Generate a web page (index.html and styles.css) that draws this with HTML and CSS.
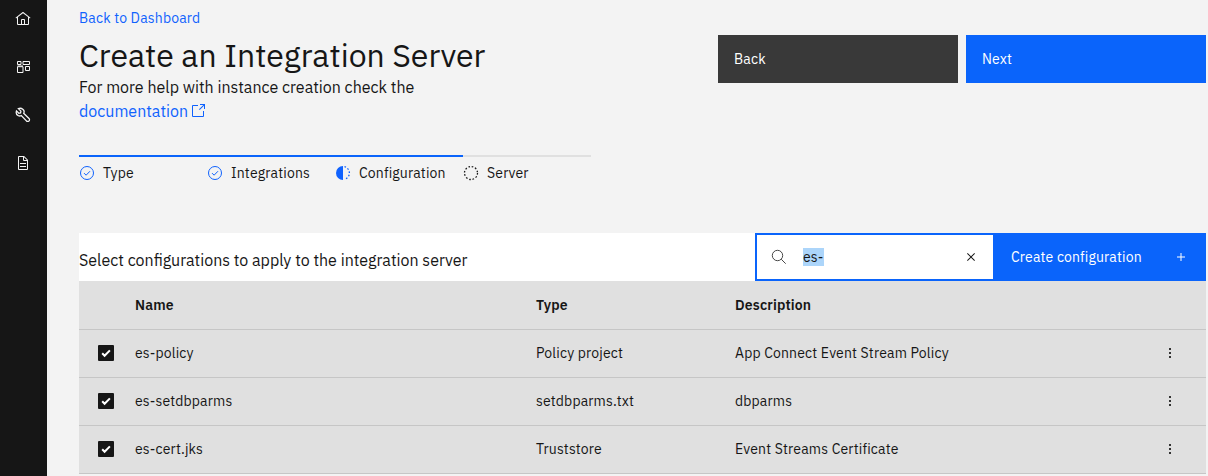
FILE: index.html
```html
<!DOCTYPE html>
<html lang="en">
<head>
<meta charset="utf-8">
<title>Create an Integration Server</title>
<link rel="stylesheet" href="styles.css">
</head>
<body>
<div class="app">
  <nav class="rail">
    <a class="rail-item"><svg class="icon" viewBox="0 0 32 32"><path d="M16.6 2.2a1 1 0 0 0-1.24 0L1 13.42l1.24 1.57L4 13.62V26a2 2 0 0 0 2 2h20a2 2 0 0 0 2-2V13.63L29.76 15 31 13.43ZM18 26h-4v-8h4Zm2 0v-8a2 2 0 0 0-2-2h-4a2 2 0 0 0-2 2v8H6V12.06l10-7.79 10 7.8V26Z"/></svg></a>
    <a class="rail-item"><svg class="icon line" viewBox="0 0 16 16"><path d="M2.500 2.500h3.500v3H2.500zM8 2.500h6.500v3H8zM2.500 7.700h5.500v5.800H2.500zM10.500 7.500h4v4h-4zM2.500 7h5.500"/></svg></a>
    <a class="rail-item"><svg class="icon line wrench" viewBox="0 0 16 16"><path d="M3.400 1.600 5.900 4.100 5.600 5.900 3.800 6.200 1.500 3.900C.8 6.200 1.500 7.900 3.300 8.700 4.500 9.200 5.500 9 6.300 8.600L11.400 13.800C12 14.600 13.100 14.700 13.900 14 14.700 13.200 14.700 12.200 14 11.500L8.700 6.300C9.400 4.900 9.100 3.200 7.800 2.200 6.500 1.200 5 1 3.400 1.600Z"/></svg></a>
    <a class="rail-item"><svg class="icon" viewBox="0 0 32 32"><path d="m25.700 9.300-7-7A1 1 0 0 0 18 2H8a2 2 0 0 0-2 2v24a2 2 0 0 0 2 2h16a2 2 0 0 0 2-2V10a1 1 0 0 0-.3-.7ZM18 4.400l5.600 5.600H18ZM24 28H8V4h8v6a2 2 0 0 0 2 2h6ZM10 22h12v2H10zM10 16h12v2H10z"/></svg></a>
  </nav>

  <main class="content">
    <a class="crumb">Back to Dashboard</a>
    <header class="head">
      <div class="intro">
        <h1 class="title">Create an Integration Server</h1>
        <p class="help">For more help with instance creation check the</p>
        <a class="doc"><span>documentation</span><svg class="icon" viewBox="0 0 32 32"><path d="M26 28H6a2 2 0 0 1-2-2V6a2 2 0 0 1 2-2h10v2H6v20h20V16h2v10a2 2 0 0 1-2 2ZM20 2v2h6.590L18 12.590 19.410 14 28 5.410V12h2V2Z"/></svg></a>
      </div>
      <div class="actions">
        <button class="btn dark">Back</button>
        <button class="btn primary">Next</button>
      </div>
    </header>

    <ol class="steps">
      <li class="step done"><svg class="icon line" viewBox="0 0 16 16"><circle cx="8" cy="8" r="6.500"/><path d="m5 8.100 2.100 2.100L11 6.200"/></svg><span>Type</span></li>
      <li class="step done"><svg class="icon line" viewBox="0 0 16 16"><circle cx="8" cy="8" r="6.500"/><path d="m5 8.100 2.100 2.100L11 6.200"/></svg><span>Integrations</span></li>
      <li class="step done"><svg class="icon line" viewBox="0 0 16 16"><path class="half" d="M8 1a7 7 0 0 0 0 14Z"/><path class="dots" d="M9.500 1.700a6.500 6.500 0 0 1 0 12.600"/></svg><span>Configuration</span></li>
      <li class="step"><svg class="icon line" viewBox="0 0 16 16"><circle class="dots" cx="8" cy="8" r="6.500"/></svg><span>Server</span></li>
    </ol>

    <section class="panel">
      <div class="toolbar">
        <p class="caption">Select configurations to apply to the integration server</p>
        <div class="search">
          <svg class="icon line lens" viewBox="0 0 16 16"><circle cx="6.500" cy="6.500" r="5.200"/><path d="m10.200 10.200 4.500 4.500"/></svg>
          <span class="query">es-</span>
          <svg class="icon clear" viewBox="0 0 32 32"><path d="M24 9.400 22.600 8 16 14.600 9.400 8 8 9.400l6.600 6.600L8 22.600 9.400 24l6.600-6.600 6.600 6.600 1.400-1.400-6.600-6.600Z"/></svg>
        </div>
        <button class="create"><span>Create configuration</span><svg class="icon" viewBox="0 0 32 32"><path d="M17 15V8h-2v7H8v2h7v7h2v-7h7v-2Z"/></svg></button>
      </div>
      <div class="table">
        <div class="row heading"><span></span><span>Name</span><span>Type</span><span>Description</span><span></span></div>
        <div class="row"><i class="check"><svg viewBox="0 0 16 16"><path d="m4.200 8.300 2.400 2.500 5.300-5.400"/></svg></i><span>es-policy</span><span>Policy project</span><span>App Connect Event Stream Policy</span><i class="more"></i></div>
        <div class="row"><i class="check"><svg viewBox="0 0 16 16"><path d="m4.200 8.300 2.400 2.500 5.300-5.400"/></svg></i><span>es-setdbparms</span><span>setdbparms.txt</span><span>dbparms</span><i class="more"></i></div>
        <div class="row"><i class="check"><svg viewBox="0 0 16 16"><path d="m4.200 8.300 2.400 2.500 5.300-5.400"/></svg></i><span>es-cert.jks</span><span>Truststore</span><span>Event Streams Certificate</span><i class="more"></i></div>
      </div>
    </section>
  </main>
</div>
</body>
</html>
```
FILE: styles.css
```css
* { box-sizing: border-box; }
body { margin: 0; background: #f3f3f3; color: #161616; font: 14px/18px "IBM Plex Sans", Roboto, "Liberation Sans", sans-serif; letter-spacing: .16px; overflow: hidden; -webkit-font-smoothing: antialiased; }
h1, p, ol { margin: 0; padding: 0; font-weight: 400; }
button { border: 0; font: inherit; letter-spacing: inherit; color: #fff; text-align: left; }
.icon { width: 16px; height: 16px; fill: currentColor; flex: none; display: block; }
.line { fill: none; stroke: currentColor; stroke-width: 1; }
.app { display: flex; height: 476px; }
.rail { width: 47px; flex: none; background: #161616; color: #f4f4f4; padding-top: 11px; display: flex; flex-direction: column; gap: 32px; }
.rail-item { padding-left: 15px; }
.wrench { stroke-width: 1.300; }
.content { flex: 1; padding: 9px 2px 0 32px; }
.crumb { display: block; color: #0f62fe; }
.head { display: flex; justify-content: space-between; margin-top: 8px; height: 119px; }
.title { font-size: 32px; line-height: 40px; letter-spacing: 0; white-space: nowrap; }
.help, .doc, .caption { font-size: 16px; line-height: 24px; letter-spacing: 0; white-space: nowrap; }
.doc { display: flex; align-items: center; gap: 2px; color: #0f62fe; }
.actions { display: flex; gap: 8px; }
.btn { width: 240px; height: 48px; padding: 0 16px; }
.dark { background: #393939; }
.primary, .create { background: #0a64fb; }
.steps { display: flex; list-style: none; margin-top: 1px; height: 78px; }
.step { width: 128px; height: 28px; padding-top: 7px; border-top: 2px solid #e0e0e0; display: flex; gap: 8px; }
.step.done { border-color: #0a64fb; }
.step .icon { margin-top: 1px; }
.step.done .icon { color: #0f62fe; }
.half { fill: currentColor; stroke: none; }
.dots { stroke-width: 1.300; stroke-dasharray: 1.600 1.800; }
.toolbar { display: flex; height: 48px; background: #fff; }
.caption { flex: 1; padding-top: 15px; }
.search { width: 240px; border: 2px solid #0a64fb; display: flex; align-items: center; padding: 0 14px; }
.lens { stroke-width: .9; color: #333; }
.query { margin-left: 16px; padding-right: 1px; background: #acd5fa; }
.clear { margin-left: auto; }
.create { width: 211px; padding: 0 17px 0 16px; display: flex; align-items: center; justify-content: space-between; }
.row { display: grid; grid-template-columns: 56px 401px 199px 427px 1fr; align-items: center; height: 48px; padding-bottom: 1px; background: #e0e0e0; border-bottom: 1px solid #c6c6c6; }
.heading { height: 49px; padding-bottom: 0; font-weight: 600; }
.check { width: 16px; height: 16px; margin-left: 19px; border-radius: 1px; background: #161616; }
.check svg { display: block; fill: none; stroke: #fff; stroke-width: 2; }
.more { width: 2px; height: 2px; margin-left: 7px; background: #333; box-shadow: 0 -4px #333, 0 4px #333; }
```
